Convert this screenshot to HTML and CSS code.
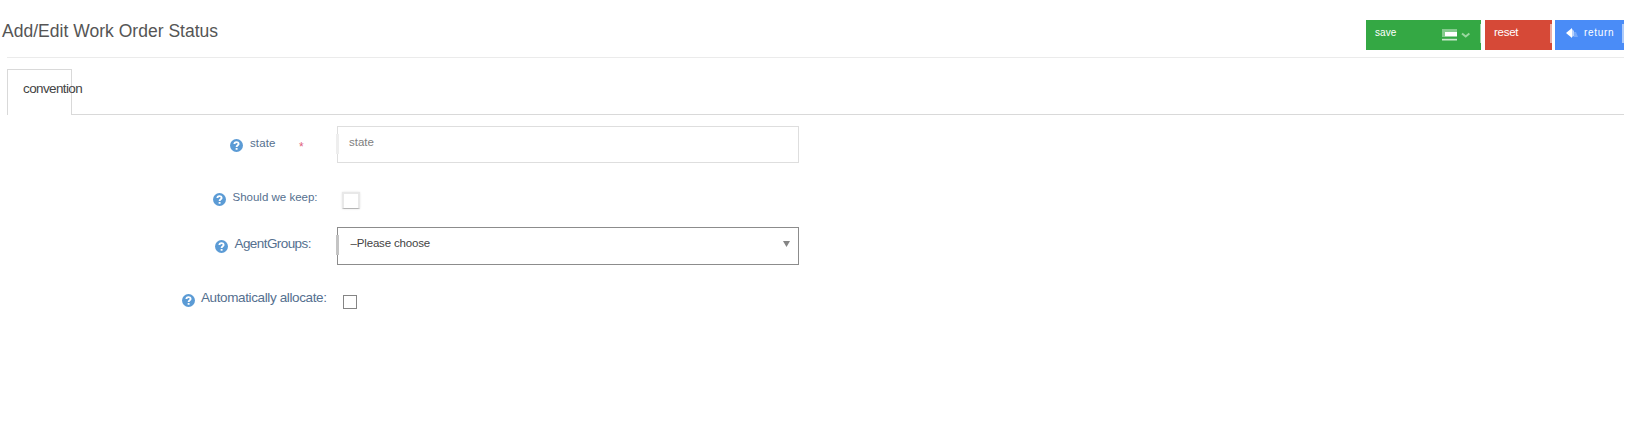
FILE: index.html
```html
<!DOCTYPE html>
<html lang="en">
<head>
<meta charset="utf-8">
<title>Add/Edit Work Order Status</title>
<link rel="stylesheet" href="styles.css">
</head>
<body>
<svg width="0" height="0" class="defs"><symbol id="help" viewBox="0 0 13 13"><circle cx="6.5" cy="6.5" r="6.5" fill="#5b9bd5"/><path d="M4.4 5.1C4.4 2.5 8.6 2.6 8.6 4.9C8.6 6.3 6.6 6.1 6.6 7.9M6.6 8.9V10.7" fill="none" stroke="#fff" stroke-width="1.9"/></symbol></svg>
<header class="header">
  <h1 class="title">Add/Edit Work Order Status</h1>
  <div class="actions">
    <button class="btn save"><span>save</span>
      <svg class="menu-icon" width="28" height="14" viewBox="0 0 28 14"><g fill="#fff"><path opacity=".4" d="M0 1h15v3H0zM0 4h3v5H0z"/><path d="M3 4h12v4.5H3z"/><path opacity=".75" d="M0 10.8h15v1.7H0z"/></g><path d="M20 5.5l3.7 3L27.4 5.5" fill="none" stroke="#9ad79f" stroke-width="2"/></svg>
    </button>
    <button class="btn reset"><span>reset</span></button>
    <button class="btn return"><svg class="back-icon" width="13" height="10" viewBox="0 0 13 10"><path d="M0 5l6-5v10z" fill="#fff"/><path d="M6 1L8 3v5L6 9z" fill="#fff" opacity=".6"/><path d="M8 4h2l2 5H8z" fill="#fff" opacity=".25"/></svg><span>return</span></button>
  </div>
</header>
<nav class="tabs"><a class="tab">convention</a><div class="tab-rest"></div></nav>
<form class="form">
  <div class="row row-state">
    <label class="label"><svg class="help"><use href="#help"/></svg><span class="text small">state</span><span class="required">*</span></label>
    <div class="field input">state</div>
  </div>
  <div class="row row-keep">
    <label class="label"><svg class="help"><use href="#help"/></svg><span class="text small">Should we keep:</span></label>
    <span class="check soft"></span>
  </div>
  <div class="row row-groups">
    <label class="label"><svg class="help"><use href="#help"/></svg><span class="text groups">AgentGroups:</span></label>
    <div class="field select"><span>–Please choose</span><svg width="7" height="6" viewBox="0 0 7 6"><path d="M0 0h7L3.5 6z" fill="#858585"/></svg></div>
  </div>
  <div class="row row-auto">
    <label class="label"><svg class="help"><use href="#help"/></svg><span class="text auto">Automatically allocate:</span></label>
    <span class="check"></span>
  </div>
</form>
</body>
</html>
```
FILE: styles.css
```css
* { box-sizing: border-box; }
body { margin: 0; background: #fff; font-family: "Liberation Sans", Arial, sans-serif; color: #444; }
.defs { display: block; }
.header { display: flex; justify-content: space-between; align-items: flex-start; height: 58px; margin: 0 12px 0 7px; padding-top: 20px; border-bottom: 1px solid #ebebeb; }
.title { margin: 1px 0 0 -5px; font-size: 17.5px; line-height: 21px; font-weight: 400; letter-spacing: .02px; color: #555; white-space: nowrap; }
.actions { display: flex; }
.btn { position: relative; display: flex; align-items: flex-start; height: 30px; margin: 0; border: 0; padding: 5px 0 0 9px; font: 10px/14px "Liberation Sans", Arial, sans-serif; color: #fff; }
/* pale highlight on the button's outer edge */
.btn::after { content: ""; position: absolute; right: -1px; top: 4px; width: 3px; height: 19px; background: rgba(255,255,255,.55); }
.save { width: 115px; margin-right: 4px; padding-top: 6px; background: #34a844; }
.save::after { right: 0; width: 1px; }
.save span { width: 67px; text-align: left; letter-spacing: .1px; }
.menu-icon { margin-top: 2px; filter: blur(.6px); }
.reset { width: 67px; margin-right: 3px; background: #d64937; font-size: 11.5px; letter-spacing: -.25px; }
.return { width: 69px; padding: 5px 0 0 11px; background: #4a8cf7; }
.return::after { right: 0; width: 2px; }
.return span { letter-spacing: .7px; margin: 1px 0 0 5px; }
.back-icon { margin-top: 3px; filter: blur(.6px); }
.tabs { display: flex; height: 46px; margin: 11px 12px 0 7px; }
.tab { width: 65px; border: 1px solid #d9d9d9; border-bottom: 0; padding: 11px 0 0 15px; font-size: 13.5px; line-height: 16px; letter-spacing: -.62px; color: #444; white-space: nowrap; }
.tab-rest { flex: 1; border-bottom: 1px solid #d9d9d9; }
.form { padding-top: 11px; }
.row { display: flex; align-items: flex-start; }
.label { display: flex; align-items: flex-start; flex: none; width: 337px; color: #55708f; white-space: nowrap; }
.help { flex: none; width: 13px; height: 13px; }
.text { line-height: 16px; }
.small { font-size: 11.5px; }
.row-state { height: 66px; }
.row-state .label { padding: 13px 0 0 230px; }
.row-state .text { width: 50px; margin: -4px 0 0 7px; letter-spacing: .1px; }
.required { font-size: 12px; line-height: 14px; margin: 1px 0 0 -1px; color: #e0607c; }
.row-keep { height: 35px; }
.row-keep .label { padding: 1px 0 0 213px; }
.row-keep .text { margin: -4px 0 0 6.5px; }
.row-groups { height: 67px; }
.row-groups .label { padding: 13px 0 0 214.5px; }
.groups { margin: -4px 0 0 7px; font-size: 13.5px; letter-spacing: -.58px; }
.row-auto .label { padding: 0 0 0 182px; }
.auto { margin: -4px 0 0 6px; font-size: 13.5px; letter-spacing: -.38px; }
.field { position: relative; width: 462px; font-size: 11.5px; line-height: 16px; }
.field::before { content: ""; position: absolute; left: -2px; top: 7px; width: 3px; height: 20px; background: #eee; }
.input { height: 37px; border: 1px solid #dedede; padding: 7px 0 0 11px; color: #808080; }
.select { display: flex; justify-content: space-between; height: 38px; border: 1px solid #8c8c8c; padding: 7px 8px 0 12.5px; letter-spacing: -.16px; color: #444; }
.select::before { background: #c4c4c4; }
.select svg { margin-top: 6px; }
.check { width: 14px; height: 14px; margin: .5px 0 0 6px; border: 1px solid #858585; }
.soft { width: 18px; height: 17px; margin: 0 0 0 5px; border: 2px solid #e8e8e8; border-bottom: 1px solid #b5b5b5; box-shadow: 0 0 2px #e4e4e4; }
```
